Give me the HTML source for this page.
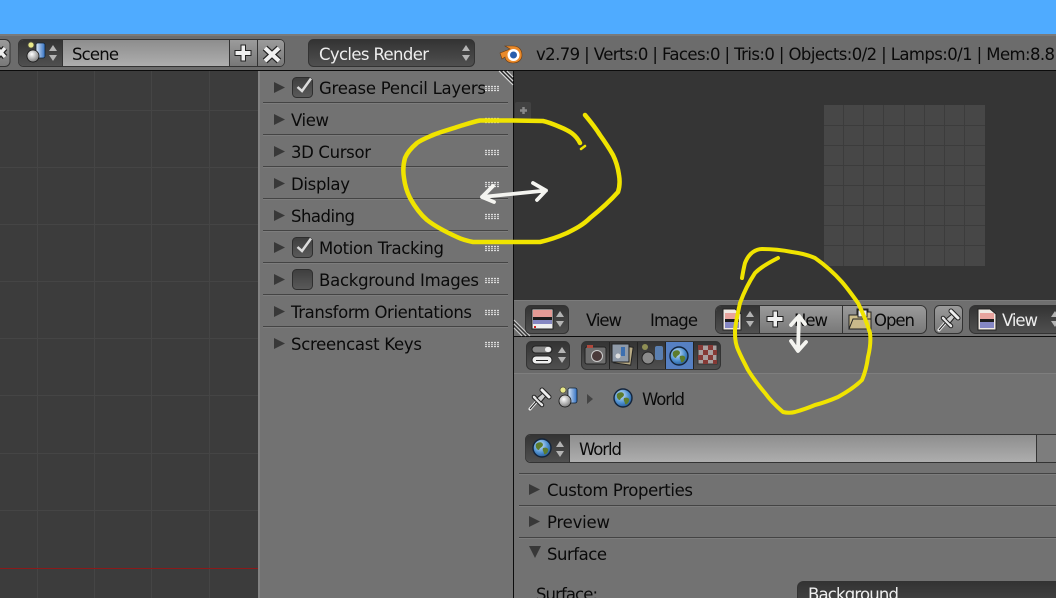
<!DOCTYPE html>
<html><head><meta charset="utf-8"><style>
html,body{margin:0;padding:0;background:#727272}
svg{display:block}
text{font-family:"DejaVu Sans","Liberation Sans",sans-serif;font-size:16.5px;fill:#0a0a0a}
</style></head><body>
<svg width="1056" height="598" viewBox="0 0 1056 598" xmlns="http://www.w3.org/2000/svg">
<defs>
<linearGradient id="dk" x1="0" y1="0" x2="0" y2="1"><stop offset="0" stop-color="#333"/><stop offset="1" stop-color="#505050"/></linearGradient>
<linearGradient id="cb" x1="0" y1="0" x2="0" y2="1"><stop offset="0" stop-color="#3e3e3e"/><stop offset="1" stop-color="#5a5a5a"/></linearGradient>
<linearGradient id="lt" x1="0" y1="0" x2="0" y2="1"><stop offset="0" stop-color="#8d8d8d"/><stop offset="1" stop-color="#aeaeae"/></linearGradient>
<linearGradient id="bt" x1="0" y1="0" x2="0" y2="1"><stop offset="0" stop-color="#9b9b9b"/><stop offset="1" stop-color="#787878"/></linearGradient>
<linearGradient id="cyl" x1="0" y1="0" x2="1" y2="0"><stop offset="0" stop-color="#dfe9f7"/><stop offset="1" stop-color="#2f6fc2"/></linearGradient>
<radialGradient id="sph" cx=".4" cy=".35" r=".7"><stop offset="0" stop-color="#fff"/><stop offset="1" stop-color="#777"/></radialGradient>
<radialGradient id="oc" cx=".4" cy=".35" r=".7"><stop offset="0" stop-color="#cfe6fb"/><stop offset=".6" stop-color="#4d8fd0"/><stop offset="1" stop-color="#21568f"/></radialGradient>
<g id="tri"><path d="M0 0L11 5.500L0 11Z" fill="#383838"/></g>
<g id="grip" fill="none" stroke-dasharray="2 1"><path d="M0 .5H14M0 4.500H14" stroke="#ddd" stroke-width="1.200"/><path d="M0 2.500H14" stroke="#c4c4c4" stroke-width="1.200"/></g>
<g id="ud"><path d="M0 7L4 1L8 7Z" fill="#b4b4b4"/><path d="M0 11L4 17L8 11Z" fill="#b4b4b4"/></g>
<g id="obj"><rect x="9" y="1" width="9" height="15" rx="2" fill="url(#cyl)" stroke="#123" stroke-width=".8"/><circle cx="6" cy="14" r="6" fill="url(#sph)" stroke="#111" stroke-width=".8"/><circle cx="4" cy="3" r="3" fill="#e8e88a" stroke="#554" stroke-width=".8"/></g>
<g id="globe"><circle cx="9" cy="9" r="9" fill="url(#oc)" stroke="#14253c" stroke-width="1.400"/><path d="M3 5C6 2 10 3 10 6C9 9 7 8 6 11C4 11 2 8 3 5ZM10 9C13 8 16 9 15 12C14 15 12 16 11 15C11 12 9 12 10 9Z" fill="#5d7c2d"/></g>
<g id="img"><path d="M0 0H12L18 5V21H0Z" fill="#f0e9e3" stroke="#222"/><rect x="2" y="4" width="14" height="6" fill="#e8a39d"/><rect x="2" y="10" width="14" height="3" fill="#1c1c1c"/><rect x="2" y="13" width="14" height="6" fill="#8587c4"/></g>
<g id="pin"><path d="M1 21L8 13" stroke="#eee" stroke-width="3" stroke-linecap="round"/><path d="M1 21L8 13" stroke="#222"/><path d="M5 9L13 17" stroke="#222" stroke-width="4.500" stroke-linecap="round"/><path d="M5 9L13 17" stroke="#e6e6e6" stroke-width="2.500" stroke-linecap="round"/><path d="M8 10L12 14L17 8L14 5Z" fill="#cfcfcf" stroke="#222"/><path d="M13 2L20 9" stroke="#222" stroke-width="5" stroke-linecap="round"/><path d="M13 2L20 9" stroke="#efefef" stroke-width="3" stroke-linecap="round"/></g>
<g id="plus"><path d="M6 0H10.500V5.500H16V10.500H10.500V16H6V10.500H0V5.500H6Z" fill="#eee" stroke="#222"/></g>
</defs>

<rect width="1056" height="598" fill="#727272"/>
<rect width="1056" height="34" fill="#4fabff"/>
<rect y="34" width="1056" height="36" fill="#6c6c6c"/>
<rect y="34" width="1056" height="2" fill="#7a7a7a"/>
<rect y="70" width="1056" height="1" fill="#0c0c0c"/>

<rect y="71" width="258" height="527" fill="#3c3c3c"/>
<path d="M37.500 71V598M94.500 71V598M151.500 71V598M209.500 71V598M0 110.500H258M0 167.500H258M0 224.500H258M0 281.500H258M0 338.500H258M0 395.500H258M0 453.500H258M0 510.500H258" stroke="#454545"/>
<rect y="568" width="258" height="1" fill="#8b1a1a"/>
<rect x="258" y="71" width="2" height="527" fill="#828282"/>

<rect x="514" y="71" width="542" height="229" fill="#353535"/>
<rect x="513" y="71" width="1" height="527" fill="#0c0c0c"/>
<rect x="515" y="102" width="16" height="18" rx="2" fill="#424242"/>
<path d="M520 110.500H527M523.500 107V114" stroke="#888" stroke-width="2.500"/>
<rect x="824" y="105" width="161" height="161" fill="#474747"/>
<path d="M843.500 105V266M863.500 105V266M883.500 105V266M904.500 105V266M924.500 105V266M944.500 105V266M964.500 105V266M824 125.500H985M824 145.500H985M824 165.500H985M824 185.500H985M824 205.500H985M824 225.500H985M824 245.500H985" stroke="#3c3c3c"/>
<path d="M499 71L513 85M503 71L513 81M507 71L513 77" stroke="#ddd"/>
<path d="M501 71L513 83M505 71L513 79" stroke="#222"/>

<rect x="-20" y="39.500" width="30" height="27" rx="5" fill="url(#bt)" stroke="#333"/>
<path d="M-3 48L5 57M5 48L-3 57" stroke="#222" stroke-width="6"/><path d="M-3 48L5 57M5 48L-3 57" stroke="#eee" stroke-width="3.500"/>
<rect x="18.500" y="39.500" width="266" height="27" rx="5" fill="#8f8f8f" stroke="#333"/>
<path d="M62 40H23.500A5 5 0 0 0 18.500 45V61.500A5 5 0 0 0 23.500 66H62Z" fill="url(#dk)"/>
<rect x="62" y="40" width="167" height="26" fill="url(#lt)"/>
<path d="M229 40H280A4 4 0 0 1 284 44V62A4 4 0 0 1 280 66H229Z" fill="url(#bt)"/>
<path d="M62.500 40V66M229.500 40V66M257.500 40V66" stroke="#333"/>
<use href="#obj" x="27" y="42"/>
<use href="#ud" x="49" y="44"/>
<text x="72" y="60" textLength="47">Scene</text>
<use href="#plus" x="235" y="45"/>
<path d="M265 48L279 61M279 48L265 61" stroke="#222" stroke-width="6.500"/><path d="M265 48L279 61M279 48L265 61" stroke="#f0f0f0" stroke-width="4"/>
<rect x="308.500" y="39.500" width="166" height="27" rx="5" fill="url(#dk)" stroke="#333"/>
<text x="319" y="60" textLength="110" style="fill:#eee">Cycles Render</text>
<use href="#ud" x="462" y="44"/>

<path d="M500 53L510 49L505 46L513 46C519 46 522 50 522 55C522 60 518 63 513 63C508 63 505 60 505 57L502 59Z" fill="#ea8a2a" stroke="#6a3a10" stroke-width=".6"/>
<circle cx="513.500" cy="55" r="6" fill="#fff"/><circle cx="513.500" cy="55" r="3.500" fill="#2a5fae"/>
<text x="536" y="60" textLength="519">v2.79 | Verts:0 | Faces:0 | Tris:0 | Objects:0/2 | Lamps:0/1 | Mem:8.8</text>
<text x="1056" y="60">5</text>

<path d="M263 102.500H508M263 134.500H508M263 166.500H508M263 198.500H508M263 230.500H508M263 262.500H508M263 294.500H508M263 326.500H508" stroke="#444"/>
<path d="M263 103.500H508M263 135.500H508M263 167.500H508M263 199.500H508M263 231.500H508M263 263.500H508M263 295.500H508M263 327.500H508" stroke="#7d7d7d"/>
<use href="#tri" x="274" y="82"/><use href="#tri" x="274" y="114"/><use href="#tri" x="274" y="146"/><use href="#tri" x="274" y="178"/><use href="#tri" x="274" y="210"/><use href="#tri" x="274" y="242"/><use href="#tri" x="274" y="274"/><use href="#tri" x="274" y="306"/><use href="#tri" x="274" y="338"/>
<use href="#grip" x="485" y="86"/><use href="#grip" x="485" y="118"/><use href="#grip" x="485" y="150"/><use href="#grip" x="485" y="182"/><use href="#grip" x="485" y="214"/><use href="#grip" x="485" y="246"/><use href="#grip" x="485" y="278"/><use href="#grip" x="485" y="310"/><use href="#grip" x="485" y="342"/>
<rect x="292.500" y="77.500" width="20" height="20" rx="4" fill="url(#cb)" stroke="#2e2e2e"/>
<path d="M297.500 87L302 91L311 78.500" fill="none" stroke="#dcdcdc" stroke-width="2.500"/>
<rect x="292.500" y="237.500" width="20" height="20" rx="4" fill="url(#cb)" stroke="#2e2e2e"/>
<path d="M297.500 247L302 251L311 238.500" fill="none" stroke="#dcdcdc" stroke-width="2.500"/>
<rect x="292.500" y="269.500" width="20" height="20" rx="4" fill="url(#cb)" stroke="#2e2e2e"/>
<text x="319" y="94" textLength="167">Grease Pencil Layers</text>
<text x="291" y="126" textLength="38">View</text>
<text x="291" y="158" textLength="80">3D Cursor</text>
<text x="291" y="190" textLength="59">Display</text>
<text x="291" y="222" textLength="64">Shading</text>
<text x="319" y="254" textLength="125">Motion Tracking</text>
<text x="319" y="286" textLength="160">Background Images</text>
<text x="291" y="318" textLength="181">Transform Orientations</text>
<text x="291" y="350" textLength="131">Screencast Keys</text>

<rect x="514" y="300" width="542" height="36" fill="#6f6f6f"/>
<rect x="514" y="300" width="542" height="1" fill="#7c7c7c"/>
<rect x="514" y="336" width="542" height="1" fill="#0c0c0c"/>
<path d="M514 320L530 336M514 324L526 336M514 328L522 336" stroke="#ccc"/><path d="M514 322L528 336M514 326L524 336" stroke="#333"/>
<rect x="525.500" y="305.500" width="43" height="28" rx="5" fill="url(#dk)" stroke="#333"/>
<rect x="532" y="309" width="21" height="20" fill="#eee" stroke="#222"/><rect x="533" y="310" width="19" height="7" fill="#e49a95"/><rect x="533" y="317" width="19" height="3" fill="#1c1c1c"/><rect x="533" y="320" width="19" height="4" fill="#8587c2"/><rect x="534" y="326" width="2" height="2" fill="#c22"/>
<use href="#ud" x="556" y="310"/>
<text x="586" y="326" textLength="36">View</text>
<text x="650" y="326" textLength="48">Image</text>
<rect x="715.500" y="305.500" width="211" height="28" rx="6" fill="url(#bt)" stroke="#333"/>
<path d="M759 306H721A5 5 0 0 0 716 311V328A5 5 0 0 0 721 333H759Z" fill="url(#dk)"/>
<path d="M759.500 306V333M842.500 306V333" stroke="#333"/>
<use href="#img" x="723" y="309"/>
<use href="#ud" x="746" y="310"/>
<use href="#plus" x="767" y="311"/>
<text x="794" y="326" textLength="34">New</text>
<path d="M849 315V329H871V312H868V309H857V315Z" fill="#cdbd8a" stroke="#222"/>
<rect x="858" y="310" width="9" height="7" fill="#eee" stroke="#222"/>
<path d="M849 329L853 319H871V329Z" fill="#c9b98a" stroke="#222"/>
<text x="874" y="326" textLength="41">Open</text>
<rect x="934.500" y="305.500" width="28" height="28" rx="5" fill="url(#bt)" stroke="#333"/>
<use href="#pin" x="938" y="309"/>
<rect x="969.500" y="305.500" width="110" height="28" rx="6" fill="url(#dk)" stroke="#333"/>
<use href="#img" x="978" y="309"/>
<text x="1002" y="326" textLength="36" style="fill:#eee">View</text>
<use href="#ud" x="1051" y="310"/>

<rect x="514" y="337" width="542" height="36" fill="#6a6a6a"/>
<rect x="514" y="373" width="542" height="1" fill="#7e7e7e"/>
<rect x="526.500" y="341.500" width="43" height="28" rx="5" fill="url(#dk)" stroke="#333"/>
<rect x="532" y="346" width="20" height="7" rx="3.500" fill="#888" stroke="#222"/><rect x="545" y="347" width="6" height="5" rx="2.500" fill="#eee"/>
<rect x="532" y="356" width="20" height="8" rx="4" fill="#eee" stroke="#222"/><path d="M536 360.500H548" stroke="#222"/>
<use href="#ud" x="558" y="346"/>
<rect x="581.500" y="341.500" width="139" height="28" rx="5" fill="url(#dk)" stroke="#333"/>
<rect x="665" y="342" width="28" height="27" fill="#5680c2"/>
<path d="M609.500 342V369M637.500 342V369M665.500 342V369M693.500 342V369" stroke="#222"/>
<rect x="585" y="347" width="21" height="17" rx="2" fill="#6e6e6e" stroke="#222"/><circle cx="597" cy="356" r="5.500" fill="#4a3a3a" stroke="#ccc"/><rect x="587" y="345" width="6" height="3" fill="#b0483c"/>
<rect x="615" y="346" width="17" height="18" fill="#b8ab85" stroke="#222" transform="rotate(8 623 355)"/>
<rect x="612" y="344" width="17" height="18" fill="#8f9aa8" stroke="#222"/><circle cx="618" cy="356" r="2.500" fill="#ddd"/><rect x="621" y="347" width="4" height="9" fill="#3c6fb0"/>
<rect x="655" y="346" width="8" height="14" rx="2" fill="#5a7fb0"/><circle cx="648" cy="358" r="6" fill="#8a8a8a" stroke="#222"/><circle cx="645" cy="347" r="3" fill="#8f8f55"/>
<use href="#globe" x="670" y="347"/>
<rect x="698" y="345" width="19" height="19" fill="#a8a0a0" stroke="#333"/>
<path d="M698 345h5v5h-5zM708 345h5v5h-5zM703 350h5v5h-5zM713 350h4v5h-4zM698 355h5v5h-5zM708 355h5v5h-5zM703 360h5v4h-5zM713 360h4v4h-4z" fill="#853a36"/>

<use href="#pin" x="529" y="388"/>
<use href="#obj" x="559" y="387"/>
<path d="M587 394L593 399L587 404Z" fill="#444"/>
<use href="#globe" x="614" y="389"/>
<text x="642" y="405" textLength="43">World</text>

<rect x="525.500" y="434.500" width="600" height="28" rx="5" fill="url(#lt)" stroke="#333"/>
<path d="M569 435H530.500A5 5 0 0 0 525.500 440V457A5 5 0 0 0 530.500 462H569Z" fill="url(#dk)"/>
<rect x="1036" y="435" width="20" height="27" fill="#7d7d7d"/>
<path d="M569.500 435V462M1036.500 435V462" stroke="#333"/>
<use href="#globe" x="533" y="439"/>
<use href="#ud" x="556" y="440"/>
<text x="579" y="455" textLength="43">World</text>

<path d="M519 473.500H1056M519 505.500H1056M519 537.500H1056" stroke="#444"/>
<path d="M519 474.500H1056M519 506.500H1056M519 538.500H1056" stroke="#7d7d7d"/>
<use href="#tri" x="529" y="484"/>
<use href="#tri" x="529" y="516"/>
<path d="M529 546H541L535 558Z" fill="#383838"/>
<text x="547" y="496" textLength="146">Custom Properties</text>
<text x="547" y="528" textLength="63">Preview</text>
<text x="547" y="560" textLength="60">Surface</text>
<text x="536" y="600" textLength="62">Surface:</text>
<rect x="797.500" y="581.500" width="300" height="40" rx="6" fill="url(#dk)" stroke="#333"/>
<text x="808" y="600" textLength="91" style="fill:#eee">Background</text>

<g fill="none" stroke="#f0e400" stroke-linejoin="round" stroke-linecap="round">
<path stroke-width="4.500" d="M580 143C576 135 570 131 560 127C553 124 548 122 543 121L513 120.500L480 120.500C472 122 464 125 457 127C448 130 440 132 433 135C426 138 421 140 417 143C410 149 407 153 405 158C403 165 403 172 404 178C405 186 407 192 410 198C415 207 420 214 427 220C436 227 446 232 457 237C463 240 468 241 473 242L540 242C549 240 558 237 567 233C575 229 583 225 590 218C600 210 610 201 618 192C620 186 620 181 619 175C618 168 616 161 613 155C609 148 605 142 600 135C595 127 590 121 585 115"/>
<path stroke-width="2.500" d="M581 149L585 146"/>
<path stroke-width="4" d="M742 278C743 272 744 267 745 263C747 258 750 254 753 252C756 250 759 249 762 249C772 249 782 250 792 252C800 253 808 255 815 258C825 265 834 273 842 282C848 289 853 296 858 303C863 313 867 323 870 333C871 341 870 349 868 357C867 365 865 373 862 380C855 387 847 392 838 397C831 400 823 403 815 405C808 408 802 410 795 412C791 413 787 413 783 412C776 406 770 400 765 393C759 386 753 378 748 370C744 362 740 355 737 347C735 341 735 336 735 330C736 321 738 312 740 303C744 292 749 282 755 273C761 267 770 262 778 258"/>
</g>
<g fill="none" stroke="#f4f4f0" stroke-linecap="round" stroke-linejoin="round" stroke-width="3.800">
<path d="M482 197L546 190.500M493 186L482 197L494 202M533 183L546 190.500L537 200"/>
<path d="M799 316L798 350M791 325L799 316L805 324M791 341L798 351L806 342"/>
</g>
</svg>
</body></html>
